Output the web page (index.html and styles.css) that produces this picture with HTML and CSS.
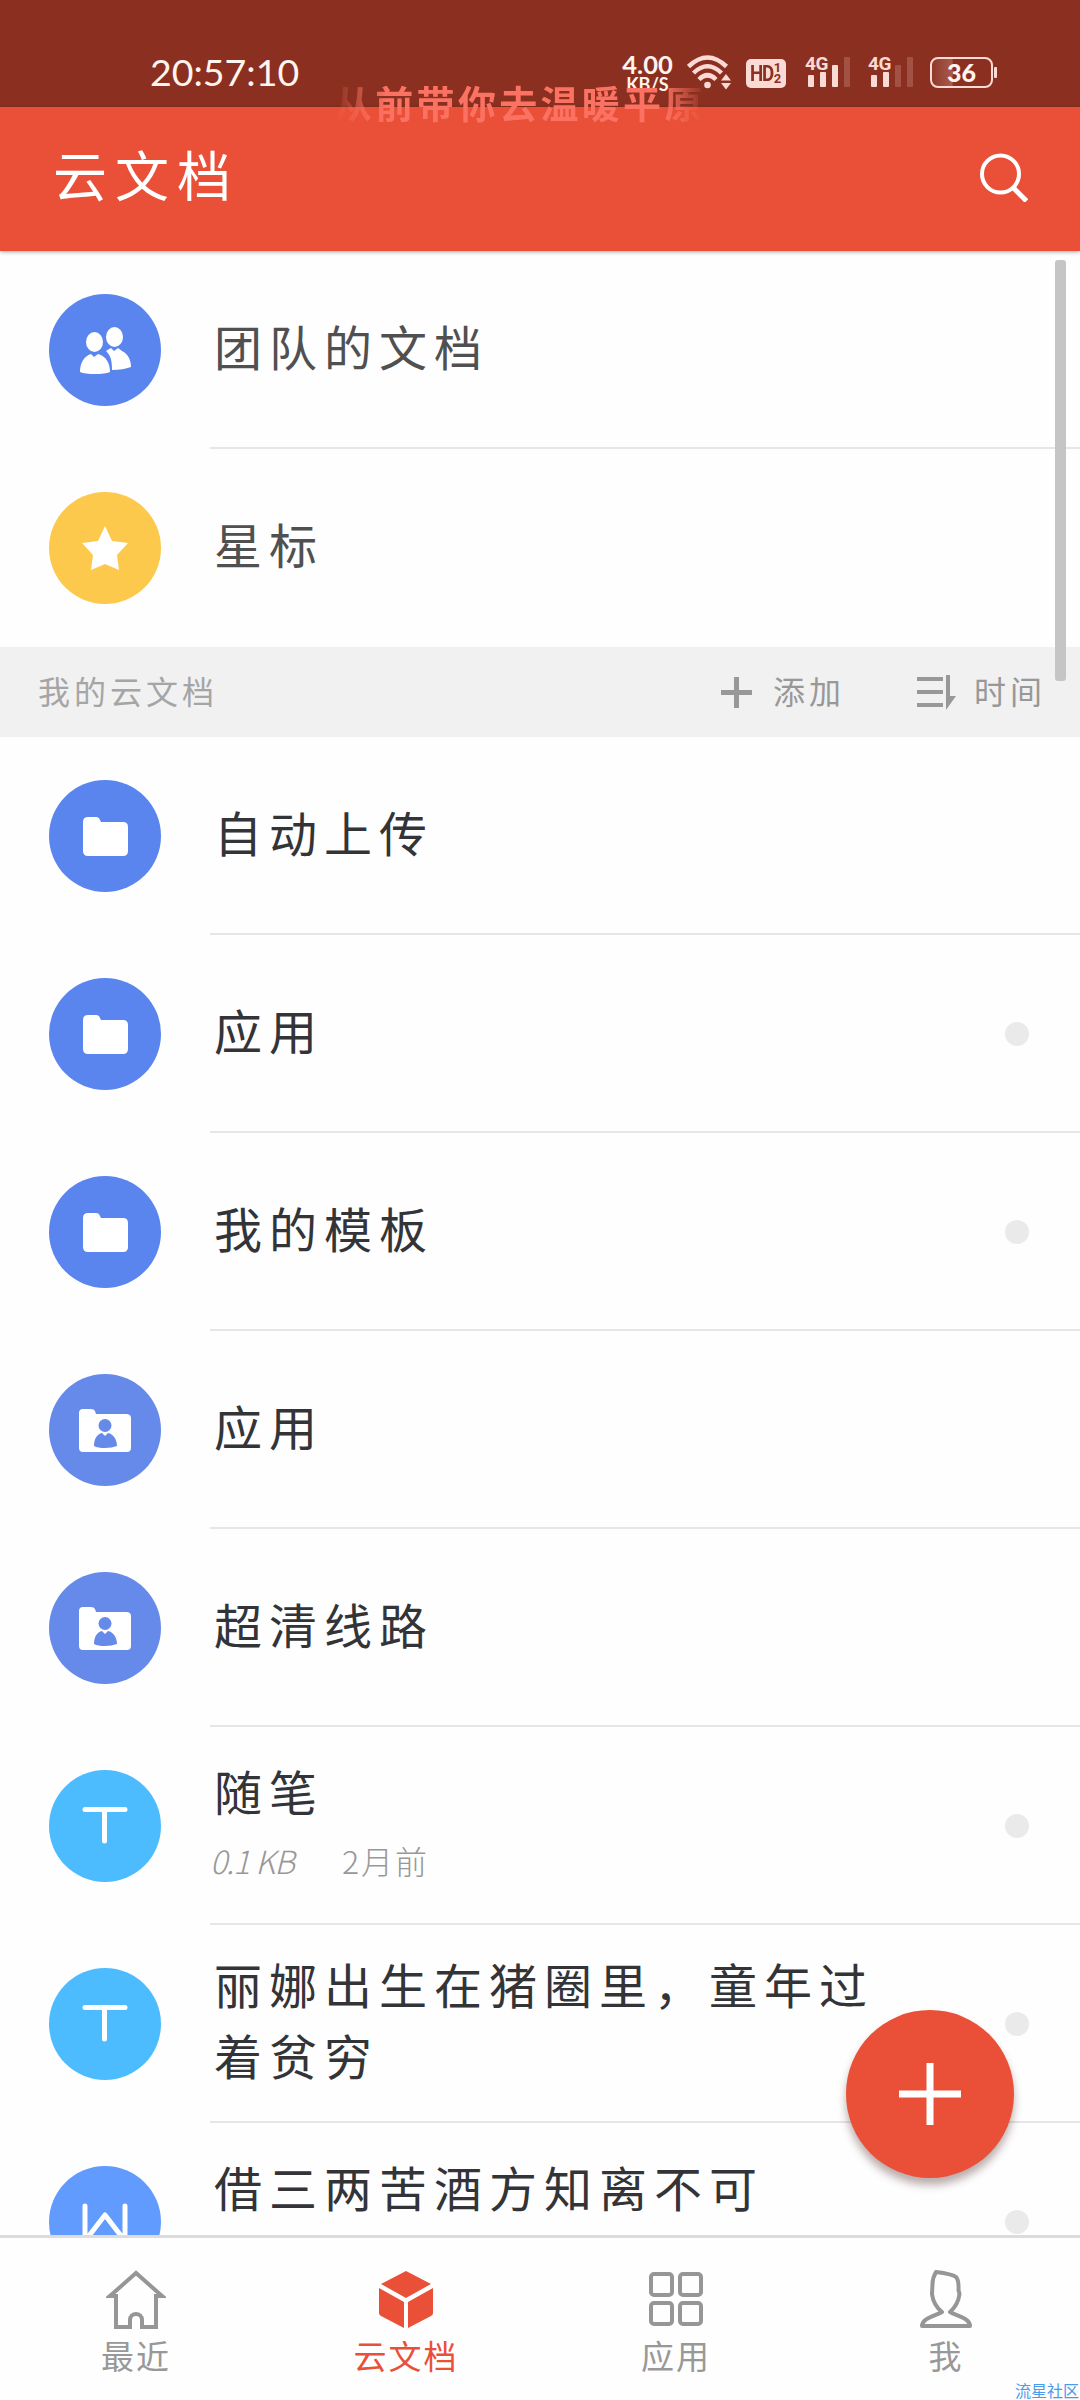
FILE: index.html
```html
<!DOCTYPE html>
<html lang="zh-CN">
<head>
    <meta charset="UTF-8">
    <meta name="viewport" content="width=device-width, initial-scale=1.0">
    <title>云文档</title>
    <link rel="stylesheet" href="styles.css">
</head>
<body>
    <!-- shared icons -->
    <svg class="defs" width="0" height="0">
        <symbol id="i-folder" viewBox="0 0 112 112">
            <path fill="#fff" d="M34 42q0-5 5-5h8q3 0 4 3l1 2h22q5 0 5 5v24q0 5-5 5H39q-5 0-5-5z"/>
        </symbol>
        <symbol id="i-shared" viewBox="0 0 112 112">
            <path fill="#fff" d="M30 39q0-4 4-4h8q3 0 4 2l1 3h30q5 0 5 4v30q0 4-4 4H34q-4 0-4-4z"/>
            <circle cx="56" cy="51.500" r="6.500" fill="#668aea"/>
            <path fill="#668aea" d="M45 72c0-7 3-12 8-13l3 3 3-3c5 1 9 6 9 13q-5 2-12 2t-11-2z"/>
        </symbol>
        <symbol id="i-text" viewBox="0 0 112 112">
            <path fill="none" stroke="#fff" stroke-width="5" stroke-linecap="round" d="M36 39.500h40M55.500 40v31"/>
        </symbol>
        <symbol id="i-word" viewBox="0 0 112 112">
            <path fill="none" stroke="#fff" stroke-width="5" stroke-linecap="round" stroke-linejoin="round" d="M36 40v35L56 49l20 26V40"/>
        </symbol>
    </svg>

    <div class="screen">
        <div class="status-bar">
            <span class="time">20:57:10</span>
            <div class="status-icons">
                <div class="net"><b>4.00</b><small>KB/S</small></div>
                <svg class="wifi" width="45" height="36" viewBox="0 0 45 36">
                    <g fill="none" stroke="#fadad5" stroke-width="4.500">
                        <path d="M1.500 12.500Q20.500-5.500 39.500 12.500"/>
                        <path d="M6.500 19Q20.500 5.500 34.500 19"/>
                        <path d="M12 25.500Q20.500 17 29 25.500"/>
                    </g>
                    <circle cx="20.500" cy="31" r="3.300" fill="#fadad5"/>
                    <path fill="#fadad5" d="M34 26.500l5-6.500 5 6.500zM34 29h10l-5 6.500z"/>
                </svg>
                <div class="hd"><span>HD</span><i>1<br>2</i></div>
                <svg class="signal" width="46" height="32" viewBox="0 0 46 32">
                    <text x="0" y="13.500">4G</text>
                    <rect x="3" y="19" width="6" height="12" rx="1"/>
                    <rect x="15" y="16" width="6" height="15" rx="1"/>
                    <rect x="27" y="9" width="6" height="22" rx="1"/>
                    <rect class="off" x="39" y="1" width="6" height="30" rx="1"/>
                </svg>
                <svg class="signal" width="46" height="32" viewBox="0 0 46 32">
                    <text x="0" y="13.500">4G</text>
                    <rect x="3" y="19" width="6" height="12" rx="1"/>
                    <rect x="15" y="16" width="6" height="15" rx="1"/>
                    <rect class="off" x="27" y="9" width="6" height="22" rx="1"/>
                    <rect class="off" x="39" y="1" width="6" height="30" rx="1"/>
                </svg>
                <div class="battery"><span>36</span></div>
            </div>
        </div>
        <div class="lyric">从前带你去温暖平原</div>

        <header class="app-bar">
            <h1>云文档</h1>
            <svg width="52" height="52" viewBox="0 0 52 52" fill="none" stroke="#fff" stroke-width="4">
                <circle cx="22.500" cy="24" r="18.500"/>
                <path stroke-width="5" d="M35.500 38l13 13"/>
            </svg>
        </header>

        <main class="list">
            <div class="row quick">
                <div class="avatar blue">
                    <svg width="112" height="112" viewBox="0 0 112 112" fill="#fff">
                        <ellipse cx="65.500" cy="43" rx="8.500" ry="10"/>
                        <path d="M57 57q3-2 5-3l3 3 4-3 4 3c6 3 9 9 9 16q-8 3-19 3c0-9-1-14-6-19z"/>
                        <ellipse cx="45.500" cy="48" rx="8.500" ry="10"/>
                        <path d="M31 78c0-9 4-16 11-18l3 3 4-3c8 2 12 9 12 18q-5 2-15 2t-15-2z"/>
                    </svg>
                </div>
                <div class="content"><p class="title">团队的文档</p></div>
            </div>
            <div class="row quick">
                <div class="avatar yellow">
                    <svg width="112" height="112" viewBox="0 0 112 112">
                        <path fill="#fff" d="M56 34l7 15 16 2-11 12 2 15-14-6-14 6 2-15-11-12 16-2z"/>
                    </svg>
                </div>
                <div class="content"><p class="title">星标</p></div>
            </div>

            <div class="section-bar">
                <span class="section-name">我的云文档</span>
                <div class="action add">
                    <svg width="31" height="31" viewBox="0 0 31 31" stroke="#989898" stroke-width="5">
                        <path d="M0 15.500h31M15.500 0v31"/>
                    </svg>
                    <span>添加</span>
                </div>
                <div class="action sort">
                    <svg width="39" height="35" viewBox="0 0 39 35" fill="#989898">
                        <path d="M0 2h26v4H0zM0 15h26v4H0zM0 28h26v4H0zM29 0h4v21h6L29 35z"/>
                    </svg>
                    <span>时间</span>
                </div>
            </div>

            <div class="row">
                <div class="avatar blue"><svg width="112" height="112"><use href="#i-folder"/></svg></div>
                <div class="content"><p class="title">自动上传</p></div>
            </div>
            <div class="row">
                <div class="avatar blue"><svg width="112" height="112"><use href="#i-folder"/></svg></div>
                <div class="content"><p class="title">应用</p><i class="dot"></i></div>
            </div>
            <div class="row">
                <div class="avatar blue"><svg width="112" height="112"><use href="#i-folder"/></svg></div>
                <div class="content"><p class="title">我的模板</p><i class="dot"></i></div>
            </div>
            <div class="row">
                <div class="avatar shared"><svg width="112" height="112"><use href="#i-shared"/></svg></div>
                <div class="content"><p class="title">应用</p></div>
            </div>
            <div class="row">
                <div class="avatar shared"><svg width="112" height="112"><use href="#i-shared"/></svg></div>
                <div class="content"><p class="title">超清线路</p></div>
            </div>
            <div class="row">
                <div class="avatar sky"><svg width="112" height="112"><use href="#i-text"/></svg></div>
                <div class="content">
                    <div class="file">
                        <p class="title">随笔</p>
                        <p class="meta"><span>0.1 KB</span><span>2月前</span></p>
                    </div>
                    <i class="dot"></i>
                </div>
            </div>
            <div class="row">
                <div class="avatar sky"><svg width="112" height="112"><use href="#i-text"/></svg></div>
                <div class="content"><p class="title">丽娜出生在猪圈里，童年过着贫穷</p><i class="dot"></i></div>
            </div>
            <div class="row">
                <div class="avatar word"><svg width="112" height="112"><use href="#i-word"/></svg></div>
                <div class="content top"><p class="title">借三两苦酒方知离不可</p><i class="dot"></i></div>
            </div>
        </main>
        <div class="scrollbar"></div>

        <button class="fab" aria-label="新建">
            <svg width="62" height="62" viewBox="0 0 62 62" stroke="#fff" stroke-width="7">
                <path d="M0 31h62M31 0v62"/>
            </svg>
        </button>

        <nav class="tabs">
            <a class="tab">
                <svg width="60" height="60" viewBox="0 0 60 60" fill="none" stroke="#969696" stroke-width="4">
                    <path d="M30 3L4 26h6v31h14V50c0-8 12-8 12 0v7h14V26h6z"/>
                </svg>
                <span>最近</span>
            </a>
            <a class="tab active">
                <svg width="60" height="60" viewBox="0 0 60 60" fill="#e95037">
                    <path d="M30 1l25 13-25 14L5 14zM3 18l25 14v26L5 46q-2-1-2-3zM57 18L32 32v26l23-12q2-1 2-3z"/>
                </svg>
                <span>云文档</span>
            </a>
            <a class="tab">
                <svg width="60" height="60" viewBox="0 0 60 60" fill="none" stroke="#969696" stroke-width="4">
                    <rect x="5" y="4" width="21" height="21" rx="3"/>
                    <rect x="34" y="4" width="21" height="21" rx="3"/>
                    <rect x="5" y="33" width="21" height="21" rx="3"/>
                    <rect x="34" y="33" width="21" height="21" rx="3"/>
                </svg>
                <span>应用</span>
            </a>
            <a class="tab">
                <svg width="60" height="60" viewBox="0 0 60 60" fill="none" stroke="#969696" stroke-width="4" stroke-linejoin="round">
                    <path d="M20 2c8 1 16 2 20 5q3 3 2.500 13l1 4c-1 8-5 14-9.500 18 7 4 20 6 20 14H6c0-8 13-10 20-14-5-4-9-10-10-18l.5-10q0-6 3.500-12z"/>
                </svg>
                <span>我</span>
            </a>
        </nav>
        <div class="watermark">流星社区</div>
    </div>
</body>
</html>
```

FILE: styles.css
```css
:root {
    --red: #e95037;
    --status: #8b3020;
    --text: #333438;
    --gray: #989898;
}

* {
    margin: 0;
    padding: 0;
    box-sizing: border-box;
}

body {
    background-color: #fefefe;
    color: var(--text);
    font-family: "Noto Sans CJK SC", sans-serif;
    font-weight: 400;
}

.defs {
    position: absolute;
}

.screen {
    position: relative;
    width: 1080px;
    height: 2400px;
    overflow: hidden;
    display: flex;
    flex-direction: column;
}

/* status bar */
.status-bar {
    flex: none;
    display: flex;
    justify-content: space-between;
    align-items: flex-start;
    height: 107px;
    padding: 49px 83px 0 150px;
    background-color: var(--status);
    color: #fff4ee;
    font-family: Lato, sans-serif;
}

.time {
    font-size: 37.500px;
    line-height: 46px;
}

.status-icons {
    display: flex;
    align-items: center;
    height: 46px;
}

.net {
    width: 51px;
    display: flex;
    flex-direction: column;
    align-items: center;
    white-space: nowrap;
}

.net b {
    font-size: 25.500px;
    font-weight: 700;
    line-height: 24px;
}

.net small {
    font-size: 18px;
    font-weight: 700;
    line-height: 17px;
}

.wifi {
    margin: 0 14px;
}

.hd {
    width: 40px;
    height: 29px;
    margin: 2px 19px 0 0;
    display: flex;
    align-items: center;
    justify-content: center;
    border-radius: 5px;
    background-color: #fadad5;
    color: var(--status);
    font-family: Roboto, sans-serif;
    font-weight: 700;
}

.hd span {
    font-size: 22px;
    letter-spacing: -1.500px;
    margin: 0 -1px 0 -3px;
    transform: scaleX(0.85);
}

.hd i {
    font-size: 13px;
    line-height: 11px;
    font-style: normal;
}

.signal {
    fill: #fadad5;
    overflow: visible;
}

.signal + .signal {
    margin: 0 16px 0 17px;
}

.signal text {
    font: 700 19px Roboto, sans-serif;
    letter-spacing: -0.5px;
}

.signal .off {
    opacity: 0.2;
}

.battery {
    position: relative;
    width: 63px;
    height: 31px;
    margin-right: 4px;
    display: flex;
    align-items: center;
    justify-content: center;
    border: 2px solid #fadad5;
    border-radius: 8px;
    background: linear-gradient(to right, rgba(250, 218, 213, 0.05), rgba(250, 218, 213, 0.25) 34%, transparent 36%);
    font-size: 25px;
    font-weight: 900;
    line-height: 27px;
}

.battery::after {
    content: "";
    position: absolute;
    right: -6px;
    top: 8px;
    width: 3px;
    height: 11px;
    border-radius: 1px;
    background-color: #fadad5;
}

/* floating desktop lyric, fades at both ends */
.lyric {
    position: absolute;
    z-index: 3;
    left: 334px;
    top: 79px;
    font-size: 38px;
    font-weight: 700;
    line-height: 46px;
    letter-spacing: 3.300px;
    color: #fb7263;
    white-space: nowrap;
    -webkit-mask-image: linear-gradient(to right, transparent, #000 14%, #000 88%, transparent);
    mask-image: linear-gradient(to right, transparent, #000 14%, #000 88%, transparent);
}

/* app bar */
.app-bar {
    position: relative;
    z-index: 2;
    flex: none;
    display: flex;
    justify-content: space-between;
    align-items: center;
    height: 144px;
    padding: 0 50px 6px 53px;
    background-color: var(--red);
    color: #fff;
    box-shadow: 0 1px 4px rgba(0, 0, 0, 0.35);
}

.app-bar h1 {
    margin-bottom: 5px;
    font-size: 54px;
    font-weight: 400;
    line-height: 60px;
    letter-spacing: 8px;
}

/* list */
.list {
    flex: 1;
    min-height: 0;
    overflow: hidden;
}

.row {
    display: flex;
    align-items: center;
    height: 198px;
    padding-left: 49px;
}

.avatar {
    flex: none;
    width: 112px;
    height: 112px;
    border-radius: 50%;
    overflow: hidden;
}

.avatar svg {
    display: block;
}

.blue {
    background-color: #5a85ee;
}

.yellow {
    background-color: #fdc94c;
}

.shared {
    background-color: #668aea;
}

.sky {
    background-color: #4dbcff;
}

.word {
    background-color: #619bfe;
}

.content {
    flex: 1;
    display: flex;
    align-items: center;
    justify-content: space-between;
    height: 198px;
    margin-left: 49px;
    padding: 0 51px 8px 4px;
    border-bottom: 2px solid #e6e6e6;
}

.row:nth-child(2) .content {
    border-bottom-color: transparent;
}

.title {
    max-width: 665px;
    font-size: 48px;
    line-height: 71px;
    letter-spacing: 7px;
}

.quick .title {
    color: #505050;
}

.content.top .title {
    margin-bottom: 61px;
}

.meta {
    display: flex;
    gap: 40px;
    margin: 3px 0 -3px -4px;
    font-size: 32px;
    font-weight: 300;
    line-height: 62px;
    color: var(--gray);
    letter-spacing: 2px;
}

.meta span:first-child {
    width: 92px;
    font-style: italic;
    white-space: nowrap;
    letter-spacing: -1px;
}

.dot {
    flex: none;
    width: 24px;
    height: 24px;
    margin-top: 10px;
    border-radius: 50%;
    background-color: #eaeaea;
}

.section-bar {
    display: flex;
    align-items: center;
    height: 90px;
    padding: 0 34px 0 38px;
    background-color: #f1f1f1;
    color: var(--gray);
    font-size: 32px;
    letter-spacing: 4px;
}

.section-bar span {
    margin-bottom: 5px;
}

.section-name {
    margin-right: auto;
    color: #a5a5a5;
}

.action {
    display: flex;
    align-items: center;
}

.add {
    gap: 21px;
    margin-right: 72px;
}

.sort {
    gap: 18px;
}

.scrollbar {
    position: absolute;
    z-index: 1;
    left: 1055px;
    top: 260px;
    width: 11px;
    height: 421px;
    border-radius: 3px;
    background-color: #c5c5c5;
}

.fab {
    position: absolute;
    z-index: 2;
    left: 846px;
    top: 2010px;
    width: 168px;
    height: 168px;
    display: flex;
    align-items: center;
    justify-content: center;
    border: none;
    border-radius: 50%;
    background-color: var(--red);
    box-shadow: 0 7px 8px rgba(60, 20, 15, 0.35);
}

/* bottom tabs */
.tabs {
    flex: none;
    display: flex;
    height: 165px;
    border-top: 3px solid #dcdcdc;
    background-color: #fefefe;
}

.tab {
    flex: 1;
    display: flex;
    flex-direction: column;
    align-items: center;
    padding: 32px 0 0 2px;
    color: var(--gray);
    font-size: 33px;
    line-height: 50px;
    letter-spacing: 2px;
}

.tab.active {
    color: var(--red);
}

.watermark {
    position: absolute;
    left: 1015px;
    top: 2381px;
    font-size: 16px;
    font-weight: 400;
    line-height: 19px;
    white-space: nowrap;
    color: #4a9bea;
}
```
